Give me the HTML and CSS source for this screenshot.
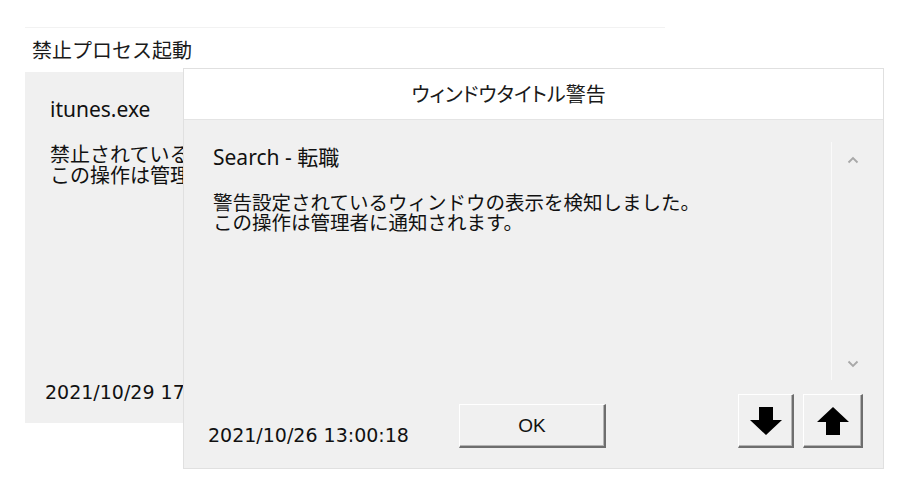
FILE: index.html
```html
<!DOCTYPE html>
<html lang="ja">
<head>
<meta charset="utf-8">
<link rel="stylesheet" href="styles.css">
</head>
<body>
<div class="desk">
  <div class="win back">
    <div class="back-title">禁止プロセス起動</div>
    <div class="back-body">
      <div class="exe">itunes.exe</div>
      <div class="clip">
        <div class="back-msg">禁止されている<br>この操作は管理</div>
      </div>
      <div class="clip date-clip">
        <div class="back-date">2021/10/29 17</div>
      </div>
    </div>
  </div>

  <div class="win front">
    <div class="front-title">ウィンドウタイトル警告</div>
    <div class="front-body">
      <div class="textbox">
        <div class="text">
          <div class="subject">Search - 転職</div>
          <div class="msg">
            <div class="line">警告設定されているウィンドウの表示を検知しました。</div>
            <div class="line">この操作は管理者に通知されます。</div>
          </div>
        </div>
        <div class="scroll">
          <svg class="chev" width="12" height="8" viewBox="0 0 12 8"><path d="M1.5 6.5 L6 2 L10.5 6.5" fill="none" stroke="#a8a8a8" stroke-width="1.8"/></svg>
          <svg class="chev" width="12" height="8" viewBox="0 0 12 8"><path d="M1.5 1.5 L6 6 L10.5 1.5" fill="none" stroke="#a8a8a8" stroke-width="1.8"/></svg>
        </div>
      </div>
      <div class="footer">
        <div class="date">2021/10/26 13:00:18</div>
        <div class="btn ok">OK</div>
        <div class="spacer"></div>
        <div class="btn arrow down">
          <svg width="34" height="30" viewBox="0 0 34 30"><path d="M10 1 H24 V14 H33 L17 29 L1 14 H10 Z" fill="#000"/></svg>
        </div>
        <div class="btn arrow up">
          <svg width="34" height="30" viewBox="0 0 34 30"><path d="M10 29 H24 V16 H33 L17 1 L1 16 H10 Z" fill="#000"/></svg>
        </div>
      </div>
    </div>
  </div>
</div>
</body>
</html>
```

FILE: styles.css
```css
* { box-sizing: border-box; }
html, body { margin: 0; padding: 0; background: #fff; }
body {
  width: 912px;
  height: 494px;
  overflow: hidden;
  font-family: "Noto Sans CJK JP", "Noto Sans", sans-serif;
  color: #111;
}
.desk {
  position: relative;
  width: 912px;
  height: 494px;
}
.win {
  position: absolute;
  display: flex;
  flex-direction: column;
}
.back {
  left: 25px;
  top: 27px;
  width: 640px;
  height: 396px;
  border-top: 1px solid #f2f2f2;
}
.back-title {
  height: 44px;
  background: #fff;
  font-size: 20px;
  line-height: 44px;
  padding-left: 7px;
  color: #1a1a1a;
}
.back-body {
  flex: 1;
  background: #f0f0f0;
  display: flex;
  flex-direction: column;
  padding: 25px 0 20px 25px;
  white-space: nowrap;
}
.clip {
  width: 133px;
  overflow: hidden;
}
.date-clip {
  margin-top: auto;
  margin-left: -5px;
  width: 138px;
}
.exe {
  font-family: "Noto Sans", sans-serif;
  font-size: 21px;
  line-height: 24px;
}
.back-msg {
  margin-top: 22px;
  font-size: 20px;
  line-height: 21px;
}
.back-date {
  font-family: "DejaVu Sans", sans-serif;
  font-size: 19px;
  line-height: 22px;
}

.front {
  left: 183px;
  top: 68px;
  width: 701px;
  height: 401px;
  border: 1px solid #e0e0e0;
}
.front-title {
  height: 50px;
  background: #fff;
  font-size: 20px;
  line-height: 50px;
  text-align: center;
  padding-right: 50px;
  font-feature-settings: "palt";
  color: #1a1a1a;
}
.front-body {
  flex: 1;
  background: #f0f0f0;
  display: flex;
  flex-direction: column;
  border-top: 1px solid #e4e4e4;
}
.textbox {
  margin: 22px 10px 0 16px;
  height: 238px;
  display: flex;
}
.text {
  flex: 1;
  padding: 3px 0 0 13px;
}
.subject {
  font-family: "Noto Sans", "Noto Sans CJK JP", sans-serif;
  font-size: 21px;
  line-height: 24px;
}
.msg {
  margin-top: 23px;
  font-size: 19.5px;
  line-height: 20px;
}
.line {
  height: 20px;
}
.scroll {
  width: 42px;
  border-left: 1px solid #fafafa;
  display: flex;
  flex-direction: column;
  justify-content: space-between;
  align-items: center;
  padding: 14px 0 12px 0;
}
.footer {
  flex: 1;
  display: flex;
  align-items: flex-end;
  padding: 0 20px 20px 24px;
}
.date {
  font-family: "DejaVu Sans", sans-serif;
  font-size: 19px;
  line-height: 22px;
  margin-bottom: 2px;
}
.btn {
  background: #f0f0f0;
  border-top: 1px solid #fff;
  border-left: 1px solid #fff;
  border-right: 2px solid #6e6e6e;
  border-bottom: 2px solid #6e6e6e;
  box-shadow: inset -1px -1px 0 #b4b4b4;
  display: flex;
  align-items: center;
  justify-content: center;
}
.ok {
  width: 147px;
  height: 44px;
  margin-left: 50px;
  font-family: "Liberation Sans", sans-serif;
  font-size: 19px;
  color: #111;
}
.spacer { flex: 1; }
.arrow {
  width: 56px;
  height: 54px;
}
.arrow.up {
  width: 60px;
  margin-left: 9px;
}
```
